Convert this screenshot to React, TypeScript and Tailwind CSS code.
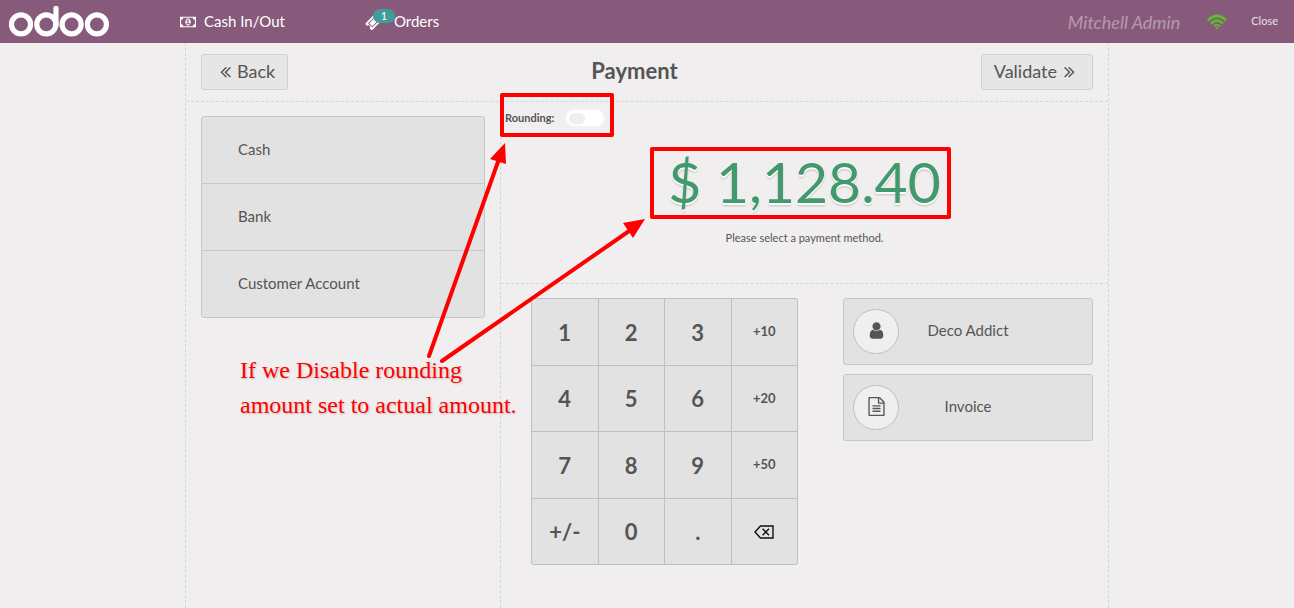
import type { ReactNode } from "react";

const ICONS = {
    money: "M768 1152h384v-96h-128v-448h-114l-148 137 77 80q42-37 55-57h2v288h-128v96zm512-256q0 70-21 142t-59.5 134-101.5 101-138 39-138-39-101.5-101-59.5-134-21-142 21-142 59.5-134 101.5-101 138-39 138 39 101.5 101 59.5 134 21 142zm512 256v-512q-106 0-181-75t-75-181h-1152q0 106-75 181t-181 75v512q106 0 181 75t75 181h1152q0-106 75-181t181-75zm128-832v1152q0 26-19 45t-45 19h-1792q-26 0-45-19t-19-45v-1152q0-26 19-45t45-19h1792q26 0 45 19t19 45z",
    ticket: "M1024 452l316 316-572 572-316-316zm-211 979l618-618q19-19 19-45t-19-45l-362-362q-18-18-45-18t-45 18l-618 618q-19 19-19 45t19 45l362 362q18 18 45 18t45-18zm889-637l-907 908q-37 37-90.5 37t-90.5-37l-126-126q56-56 56-136t-56-136-136-56-136 56l-125-126q-37-37-37-90.5t37-90.5l907-906q37-37 90.5-37t90.5 37l125 125q-56 56-56 136t56 136 136 56 136-56l126 125q37 37 37 90.5t-37 90.5z",
    left: "M1011 1376q0 13-10 23l-50 50q-10 10-23 10t-23-10l-466-466q-10-10-10-23t10-23l466-466q10-10 23-10t23 10l50 50q10 10 10 23t-10 23l-393 393 393 393q10 10 10 23zm384 0q0 13-10 23l-50 50q-10 10-23 10t-23-10l-466-466q-10-10-10-23t10-23l466-466q10-10 23-10t23 10l50 50q10 10 10 23t-10 23l-393 393 393 393q10 10 10 23z",
    right: "M979 960q0 13-10 23l-466 466q-10 10-23 10t-23-10l-50-50q-10-10-10-23t10-23l393-393-393-393q-10-10-10-23t10-23l50-50q10-10 23-10t23 10l466 466q10 10 10 23zm384 0q0 13-10 23l-466 466q-10 10-23 10t-23-10l-50-50q-10-10-10-23t10-23l393-393-393-393q-10-10-10-23t10-23l50-50q10-10 23-10t23 10l466 466q10 10 10 23z",
    user: "M1536 1399q0 109-62.5 187t-150.5 78h-854q-88 0-150.5-78t-62.5-187q0-85 8.5-160.5t31.5-152 58.5-131 94-89 134.5-34.5q131 128 313 128t313-128q76 0 134.5 34.5t94 89 58.5 131 31.5 152 8.5 160.5zm-256-887q0 159-112.5 271.5t-271.5 112.5-271.5-112.5-112.5-271.5 112.5-271.5 271.5-112.5 271.5 112.5 112.5 271.5z",
    file: "M1596 380q28 28 48 76t20 88v1152q0 40-28 68t-68 28h-1344q-40 0-68-28t-28-68v-1600q0-40 28-68t68-28h896q40 0 88 20t76 48zm-444-244v376h376q-10-29-22-41l-313-313q-12-12-41-22zm384 1528v-1024h-416q-40 0-68-28t-28-68v-416h-768v1536h1280zm-1024-864q0-14 9-23t23-9h704q14 0 23 9t9 23v64q0 14-9 23t-23 9h-704q-14 0-23-9t-9-23v-64zm736 224q14 0 23 9t9 23v64q0 14-9 23t-23 9h-704q-14 0-23-9t-9-23v-64q0-14 9-23t23-9h704zm0 256q14 0 23 9t9 23v64q0 14-9 23t-23 9h-704q-14 0-23-9t-9-23v-64q0-14 9-23t23-9h704z",
};

const Icon = ({ name, className, box = "0 0 1792 1792" }: {
    name: keyof typeof ICONS;
    className: string;
    box?: string;
}) => (
    <svg viewBox={box} fill="currentColor" className={className} aria-hidden="true">
        <path d={ICONS[name]} />
    </svg>
);

const Logo = () => (
    <svg viewBox="0 0 102 32" className="w-[102px] h-8" fill="none" stroke="white" strokeWidth="5.2" aria-label="odoo">
        <circle cx="13" cy="18.4" r="9.5" />
        <circle cx="38.3" cy="18.4" r="9.5" />
        <circle cx="63.6" cy="18.4" r="9.5" />
        <circle cx="88.9" cy="18.4" r="9.5" />
        <path d="M48 19V2.4" strokeLinecap="round" />
    </svg>
);

const Wifi = () => (
    <svg viewBox="0 0 20 16" className="w-5 h-4" fill="none" stroke="#5dbb2f" strokeWidth="2.7" aria-label="Connected">
        <path d="M0.8 6.4Q10 -2.4 19.2 6.4" />
        <path d="M4 9.4Q10 4 16 9.4" />
        <path d="M7 12.2Q10 9.9 13 12.2" strokeWidth="2" />
        <path d="M8.2 13.6Q10 12.4 11.8 13.6L10 15.6Z" fill="#5dbb2f" stroke="none" />
    </svg>
);

const TopBar = () => (
    <header className="flex items-center justify-between h-[43px] bg-[#875a7b] text-white">
        <div className="flex items-center">
            <a href="#" className="pl-2"><Logo /></a>
            <button className="ml-[70px] flex items-center gap-2">
                <Icon name="money" box="0 0 1920 1792" className="w-4 h-4" />
                <span>Cash In/Out</span>
            </button>
            <button className="relative ml-20 flex items-center gap-3">
                <Icon name="ticket" className="w-[17px] h-[18px]" />
                <span>Orders</span>
                <span className="absolute left-2 -top-px w-[22px] h-[14px] rounded-full bg-[#3f9c98] text-[11px] leading-[14px] text-center">
                    1
                </span>
            </button>
        </div>
        <div className="flex items-center pr-4">
            <span className="text-lg italic text-white/40">Mitchell Admin</span>
            <span className="ml-[27px]"><Wifi /></span>
            <button className="ml-6 text-[11px] text-white/80">Close</button>
        </div>
    </header>
);

const METHODS = ["Cash", "Bank", "Customer Account"];

const PaymentMethods = () => (
    <div className="border border-[#c6c9c8] rounded-[3px] bg-[#e2e2e2] divide-y divide-[#c6c9c8]">
        {METHODS.map((method) => (
            <button key={method} className="block w-full h-[66px] px-9 pb-[2px] text-left not-last:h-[67px]">
                {method}
            </button>
        ))}
    </div>
);

const Backspace = () => (
    <svg viewBox="0 0 20 14" className="w-5 h-[14px]" fill="none" stroke="#111" strokeWidth="1.4" aria-label="Backspace">
        <path d="M6.5 1H19V13H6.5L1 7Z" />
        <path d="M8.6 3.8L15 10.2M15 3.8L8.6 10.2" />
    </svg>
);

const KEYS = ["1", "2", "3", "+10", "4", "5", "6", "+20", "7", "8", "9", "+50", "+/-", "0", ".", "back"];

const Numpad = () => (
    <div className="grid grid-cols-4 w-[267px] h-[267px] border-l border-t border-[#bfbfbf] rounded-[3px] bg-[#e2e2e2] overflow-hidden">
        {KEYS.map((key) => (
            <button
                key={key}
                className={`flex items-center justify-center border-r border-b border-[#bfbfbf] font-bold last:rounded-br-[3px]
                    ${/^\+\d/.test(key) ? "text-[13px]" : "text-[22px] pt-px"}`}
            >
                {key === "back" ? <Backspace /> : key}
            </button>
        ))}
    </div>
);

const SideButton = ({ icon, children }: { icon: ReactNode; children: ReactNode }) => (
    <button className="relative flex items-center justify-center w-full h-[67px] border border-[#c6c6c6] rounded-[3px] bg-[#e2e2e2] pb-[2px]">
        <span className="absolute left-[9px] top-[10px] flex items-center justify-center w-[46px] h-[45px] pb-[2px] rounded-full border border-[#bfbfbf] bg-[#efefef]">
            {icon}
        </span>
        {children}
    </button>
);

// red markers and the note drawn over the screen
const Annotations = () => (
    <>
        <svg viewBox="0 0 922 400" className="absolute left-0 top-0 w-[922px] h-[400px] pointer-events-none" aria-hidden="true">
            <g fill="none" stroke="#ff0000" strokeWidth="4" strokeLinecap="round" strokeLinejoin="round">
                <rect x="316" y="52" width="110" height="40" />
                <rect x="466" y="106" width="297" height="68" />
                <path d="M243 313L313 116" />
                <path d="M256 318L446 186" />
            </g>
            <g fill="#ff0000">
                <path d="M319 100L304 116L320 121Z" />
                <path d="M459 176L437 180L447 195Z" />
            </g>
        </svg>
        <p className="absolute left-[54px] top-[310px] w-[300px] text-2xl leading-[35px] text-[#ff0000] font-['Liberation_Serif',serif] [text-shadow:1px_1px_2px_rgba(0,0,0,0.2)]">
            If we Disable rounding<br />amount set to actual amount.
        </p>
    </>
);

export default function App() {
    return (
        <div className="flex flex-col min-h-screen bg-[#f0eeee] text-[#555] text-[15px] font-[Lato,sans-serif]">
            <TopBar />
            <main className="relative flex flex-col flex-1 w-full max-w-[924px] mx-auto border-x border-dashed border-[#d6d6d6]">
                <div className="flex items-center justify-between h-[59px] px-[15px] border-b border-dashed border-[#d6d6d6]">
                    <button className="flex items-center h-9 pl-[14px] pr-3 pb-[2px] gap-[2px] text-lg bg-[#e6e6e6] border border-[#cfd0d0] rounded-[3px]">
                        <Icon name="left" className="w-[19px] h-[19px]" />
                        Back
                    </button>
                    <h1 className="pb-1 text-[22px] font-bold">Payment</h1>
                    <button className="flex items-center h-9 px-3 pb-[2px] gap-[2px] text-lg bg-[#e6e6e6] border border-[#cfd0d0] rounded-[3px]">
                        Validate
                        <Icon name="right" className="w-[21px] h-[19px]" />
                    </button>
                </div>

                <div className="flex flex-1">
                    <section className="w-[314px] shrink-0 px-[15px] pt-[14px]">
                        <PaymentMethods />
                    </section>

                    <section className="flex-1 border-l border-dashed border-[#d6d6d6]">
                        <div className="h-[182px] border-b border-dashed border-[#d6d6d6]">
                            <label className="flex items-center gap-3 h-8 pl-1 text-[11px] font-bold">
                                Rounding:
                                <input
                                    type="checkbox"
                                    className="appearance-none flex items-center w-[38px] h-4 px-[3px] rounded-full bg-white shadow-[0_0_3px_2px_#f4f3f3]
                                        before:w-4 before:h-[11px] before:rounded-full before:bg-[#f0eeee]"
                                />
                            </label>
                            <div className="flex flex-col items-center text-center">
                                <div className="text-[57px] leading-[94px] text-[#43996e] [text-shadow:0_2px_0_#fff,0_3px_2px_rgba(0,0,0,0.2)]">
                                    $ 1,128.40
                                </div>
                                <p className="text-[11px] leading-5">Please select a payment method.</p>
                            </div>
                        </div>
                        <div className="flex justify-between pl-[30px] pr-[15px] pt-[14px]">
                            <Numpad />
                            <div className="flex flex-col gap-[9px] w-[250px]">
                                <SideButton icon={<Icon name="user" className="w-[19px] h-[19px]" />}>Deco Addict</SideButton>
                                <SideButton icon={<Icon name="file" className="w-[19px] h-[19px]" />}>Invoice</SideButton>
                            </div>
                        </div>
                    </section>
                </div>
                <Annotations />
            </main>
        </div>
    );
}
